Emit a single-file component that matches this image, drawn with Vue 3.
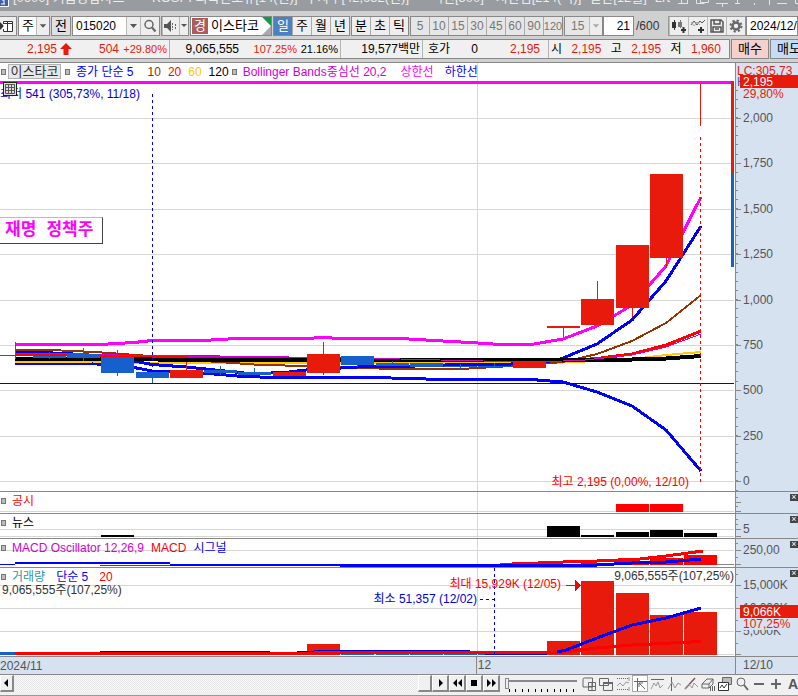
<script setup>
import { ref } from 'vue'

const units = ['일', '주', '월', '년']
const intraday = ['분', '초', '틱']
const minutes = ['5', '10', '15', '30', '45', '60', '90', '120']
const code = ref('015020')
const count = ref('21')
const date = ref('2024/12/10')

// left edge, open/close top and bottom, wick top and bottom
const candles = [
  { x: -1, t: 355, b: 356, wt: 342, wb: 359, c: 'dn', w: 17 },
  { x: 33, t: 356, b: 358, wt: 352, wb: 359, c: 'dn' },
  { x: 67, t: 354, b: 358, wt: 348, wb: 361, c: 'dn' },
  { x: 101, t: 357, b: 373, wt: 350, wb: 376, c: 'dn' },
  { x: 136, t: 372, b: 378, wt: 372, wb: 383, c: 'dn' },
  { x: 170, t: 370, b: 378, wt: 362, wb: 378, c: 'up' },
  { x: 204, t: 370, b: 373, wt: 366, wb: 375, c: 'dn' },
  { x: 238, t: 372, b: 375, wt: 368, wb: 375, c: 'dn' },
  { x: 273, t: 372, b: 376, wt: 371, wb: 376, c: 'up' },
  { x: 307, t: 354, b: 373, wt: 342, wb: 375, c: 'up' },
  { x: 341, t: 356, b: 365, wt: 356, wb: 367, c: 'dn' },
  { x: 376, t: 363, b: 366, wt: 361, wb: 366, c: 'dn' },
  { x: 410, t: 363, b: 367, wt: 363, wb: 367, c: 'dn' },
  { x: 444, t: 366, b: 367, wt: 364, wb: 369, c: 'dn' },
  { x: 478, t: 366, b: 367, wt: 363, wb: 368, c: 'dn' },
  { x: 513, t: 362, b: 368, wt: 362, wb: 368, c: 'up' },
  { x: 547, t: 326, b: 328, wt: 326, wb: 337, c: 'up' },
  { x: 581, t: 299, b: 325, wt: 281, wb: 325, c: 'up' },
  { x: 616, t: 245, b: 308, wt: 245, wb: 317, c: 'up' },
  { x: 650, t: 174, b: 258, wt: 174, wb: 268, c: 'up' },
  { x: 684, t: 84, b: 84, wt: 84, wb: 126, c: 'up' },
]
const prices = ['2,000', '1,750', '1,500', '1,250', '1,000', '750', '500', '250', '0']
const priceY = [118, 163, 209, 254, 300, 345, 390, 436, 481]
const minor = []
for (let y = 90; y < 490; y += 9.08) minor.push(Math.round(y))

const news = [[101, 535], [547, 526], [581, 535], [616, 532], [650, 530], [684, 533]]
const volumes = [[307, 644], [547, 641], [581, 581], [616, 593], [650, 615], [684, 612]]
const slowDays = [341, 376, 410, 444, 478]
const ticks = [509, 515, 522, 528, 535, 541, 547, 554, 560, 566, 573]
</script>

<template>
  <main class="app">
    <header class="title">
      <svg class="appicon" width="9" height="8" viewBox="0 0 9 8"><path d="M0 0h8v6H0z" fill="#3c62ac" /><path d="M0 6.500h8.500V0" stroke="#fff" fill="none" /><path d="M2 0h2v4M1 4h4" stroke="#fff" fill="none" /></svg>
      <span class="t1">[0600] 키움종합차트</span><span>-&nbsp; KOSPI 외국인보유[14(천)]</span><span>투자주[42,652(천)]</span>
      <span class="t2">액면[500]</span><span class="t3">시관임[214(억)]</span><span>결산[12월]</span><span>Lrt</span>
      <svg class="winicons" width="142" height="11" viewBox="656 0 142 11" fill="none" stroke="#e4e5e7">
        <path d="M654 3.500h11M659.500 0v4M665.500 0v4M674.500 0v3.500h8M678.500 0v2.500h8V0M694 3.500h12M700.500 4v3M713 3.500h5M715.500 0v4M732.500 3v2M747.500 0v5M755 3.500h10M773.500 0v3.500h9V0M792 4l5-4" />
      </svg>
    </header>

    <nav class="toolbar" aria-label="차트 도구">
      <button class="tb w17" aria-label="차트 창"><svg width="16" height="16" viewBox="0 0 16 16"><path d="M0 4l4 4-4 4z" fill="#333" /><path d="M3.500 5V3.500h9v10h-9V11M7.500 4v9M3 5.500h9" stroke="#333" fill="#fff" /></svg></button>
      <label class="combo w32 g1"><select aria-label="시장 구분"><option>주</option></select><svg viewBox="0 0 13 18"><path d="M3 7h7l-3.500 4z" /></svg></label>
      <button class="tb w20 g1 dark">전</button>
      <div class="group g1">
        <input v-model="code" class="code" aria-label="종목코드">
        <button class="flat w14" aria-label="종목 목록"><svg width="13" height="18" viewBox="0 0 13 18"><path d="M3 7h7l-3.500 4z" fill="#555" /></svg></button>
        <button class="flat w19" aria-label="검색"><svg width="16" height="16" viewBox="0 0 16 16" fill="none" stroke="#666"><circle cx="7" cy="6.500" r="4" stroke-width="1.500" /><path d="M10 9.500l3.500 4" stroke-width="2" /></svg></button>
      </div>
      <div class="group g1">
        <button class="flat w17" aria-label="소리"><svg width="16" height="16" viewBox="0 0 16 16"><path d="M1 6h3l4-4v12l-4-4H1z" fill="#555" /><path d="M9.500 5v7M12.500 6v2M12.500 9v2" stroke="#666" stroke-dasharray="2 1" /></svg></button>
        <button class="flat w9" aria-label="소리 설정"><svg width="9" height="18" viewBox="0 0 9 18"><path d="M1 7h6l-3 3z" fill="#555" /></svg></button>
      </div>
      <div class="stock g1"><b>경</b><span>이스타코</span><svg width="9" height="18" viewBox="0 0 9 18"><path d="M0 0h9v9z" fill="#129a48" /><path d="M9 9v9H0z" fill="#aaa" /></svg></div>
      <div class="group g1 periods"><button v-for="(u, i) in units" :key="u" :class="['p', { on: i === 0 }]">{{ u }}</button></div>
      <div class="group g1 periods"><button v-for="u in intraday" :key="u" class="p">{{ u }}</button></div>
      <div class="group g1 periods dim"><button v-for="u in minutes" :key="u" class="p">{{ u }}</button></div>
      <label class="combo w39 g1 off"><select aria-label="분 간격" disabled><option>15</option></select><svg viewBox="0 0 13 18"><path d="M3 7h7l-3.500 4z" /></svg></label>
      <label class="cnt"><input v-model="count" aria-label="봉 개수"><span>/600</span></label>
      <div class="group tools">
        <button class="flat w19" aria-label="봉 추가"><svg width="16" height="16" viewBox="0 0 16 16"><path d="M1 4h4v6H1zM3 2h1v10H3z" fill="#333" /><path d="M7 4h4v5H7zM9 2h1v8H9z" fill="#777" /><path d="M12.500 9v6M10 12h5" stroke="#333" stroke-width="2" /></svg></button>
        <button class="flat w19" aria-label="지표 추가"><svg width="16" height="16" viewBox="0 0 16 16"><path d="M1 7l3-4 3 4 3-4 2 2 3-3" fill="none" stroke="#555" /><path d="M1 4l3 4 3-4 3 3" fill="none" stroke="#aaa" /><path d="M11 9v6M8 12h6" stroke="#333" stroke-width="2" /></svg></button>
        <button class="flat w19" aria-label="저장"><svg width="16" height="16" viewBox="0 0 16 16" fill="none" stroke="#555" stroke-width="1.500"><path d="M2 2h10l2 2v10H2zM5 2v4h6V2M4 14V9h8v5M6 11h4" /></svg></button>
        <button class="flat w19" aria-label="설정"><svg width="16" height="16" viewBox="0 0 16 16" fill="none" stroke="#666"><circle cx="8" cy="8" r="3.500" stroke-width="2.500" /><circle cx="8" cy="8" r="5.500" stroke-width="2" stroke-dasharray="2.160 2.160" /></svg></button>
      </div>
      <input v-model="date" class="date" aria-label="날짜">
    </nav>

    <section class="quote" aria-label="시세">
      <div class="strip">
        <div class="cell c1 red"><span class="n1">2,195</span><svg width="12" height="12" viewBox="0 0 12 12"><path d="M6 0l6 6H8.500v6h-5V6H0z" fill="#e81a0b" /></svg><span class="n2">504</span><span class="n3">+29.80%</span></div>
        <div class="cell c2"><span class="n4">9,065,555</span><span class="n5 red">107.25%</span><span class="n6">21.16%</span></div>
        <div class="cell c3"><span>19,577백만</span></div>
        <div class="cell c4"><span>호가</span><span class="n7">0</span><span class="n8 red">2,195</span></div>
        <div class="cell c5"><span>시</span><span class="red">2,195</span><span>고</span><span class="red">2,195</span><span>저</span><span class="red">1,960</span></div>
      </div>
      <button class="buy">매수</button><button class="sell">매도</button>
    </section>

    <section class="panel line main">
      <div class="plot">
        <svg class="gfx" viewBox="0 63 735 428" preserveAspectRatio="none">
          <g fill="#d6d6d6"><rect v-for="y in priceY" :key="y" x="0" :y="y" width="734" height="1" /><rect x="477" y="63" width="1" height="428" /></g>
          <g fill="none" stroke-linejoin="round">
            <path d="M0 82.500H734M15 344.500H100L134 342.500 152 340.500H203L237 338.500H306L323 337.500 340 338.500 400 338.500 443 341 470 342.500 500 344.500H531L563 339 597 326 632 305 666 266 701 197" stroke="#f0f" stroke-width="3" />
            <path d="M15 363.500H92L134 367.500 152 371 203 373 237 376 271 377.500H374L443 379.500H531L563 382 597 392 632 406 666 430 701 471" stroke="#00f" stroke-width="3" />
            <path d="M15 361.500H92L134 362.500H460L563 362.500 597 361 632 359 666 355 701 352" stroke="#ffc800" stroke-width="2" />
            <path d="M15 350H50L95 352 150 356 204 361 254 364.500 300 366 340 367 392 369H460L495 367 529 365 563 362 597 354 632 341 666 323 701 295" stroke="#963200" stroke-width="2" />
            <path d="M15 352.500H40L66 353.500 100 356 134 361 152 364.500 186 367 220 370.500 254 374 289 372 306 370 341 368 357 367 400 366.500 460 364.500 494 365 529 363 555 360.500 563 358 597 344 632 320 666 281 701 226" stroke="#00f" stroke-width="3" />
            <path d="M15 354.500H67L134 356 203 356 237 358 340 359 529 361 563 361 597 358.500 632 354 666 345 701 331" stroke="#f00" stroke-width="3" />
            <path d="M15 358.500H100L152 359.500 340 360H460L597 360.500 632 359.500 666 358.500 701 356" stroke="#000" stroke-width="4" />
            <path d="M15 353.500H67L134 355.500 237 356.500 340 357.500 400 359 460 360.500 529 362 580 360.500 632 355 666 347 701 334" stroke="#d400d4" stroke-width="1" />
          </g>
          <rect x="0" y="383" width="734" height="1" fill="#0000c8" />
          <g v-for="c in candles" :key="c.x" :class="c.c"><rect :x="c.x" :y="c.t" :width="c.w || 33" :height="c.b - c.t" /><rect :x="c.x + 16" :y="c.wt" width="1" :height="c.wb - c.wt" /></g>
          <path d="M152.500 94V372" stroke="#00d" stroke-dasharray="3 3" />
          <path d="M700.500 137V482" stroke="#f00" stroke-dasharray="3 3" />
          <rect x="731" y="81" width="3" height="93" fill="#e81a0b" /><rect x="731" y="174" width="3" height="93" fill="#1560cc" />
        </svg>
        <div class="legend">
          <i></i><button class="name">이스타코</button><i></i>
          <span class="blue l1">종가 단순 5</span><span class="brown l4">10</span><span class="pure">20</span><span class="gold">60</span><span class="l2">120</span><i></i>
          <span class="purple l0">Bollinger Bands중심선 20,2</span><span class="mag l4">상한선</span><span class="blue l5">하한선</span>
        </div>
        <span class="note low">최저 541 (305,73%, 11/18)</span>
        <button class="grid" aria-label="표 보기"><svg width="14" height="14" viewBox="0 0 14 14" fill="none" stroke="#555"><path d="M2.500 2.500h9v9h-9zM2.500 5.500h9M2.500 8.500h9M5.500 3v8M8.500 3v8" /></svg></button>
        <span class="theme">재명 정책주</span>
        <span class="note high">최고 2,195 (0,00%, 12/10)</span>
      </div>
      <div class="axis">
        <svg width="63" height="428" viewBox="735 63 63 428">
          <rect x="735" y="63" width="1" height="428" fill="#888" />
          <g fill="#888"><rect v-for="y in minor" :key="y" x="736" :y="y" width="2" height="1" /><rect v-for="y in priceY" :key="'p' + y" x="736" :y="y" width="5" height="1" /></g>
          <text v-for="(p, i) in prices" :key="p" x="743" :y="priceY[i] + 4">{{ p }}</text>
          <text x="737" y="75" class="fr">LC:305,73</text>
          <text x="737" y="86" class="fb">H</text>
          <rect x="740" y="75" width="58" height="13" fill="#e81a0b" />
          <text x="743" y="86" class="fw">2,195</text><text x="743" y="98" class="fr">29,80%</text>
        </svg>
      </div>
    </section>

    <section class="panel disclosure line">
      <div class="plot">
        <svg class="gfx" viewBox="0 492 735 21" preserveAspectRatio="none"><path d="M0 511.500H734M477.500 492V513" stroke="#d6d6d6" /><path d="M616 504h33v8h-33zM650 504h33v8h-33z" fill="#f00" /></svg>
        <div class="legend"><i></i><span class="pure l0">공시</span></div>
      </div>
      <div class="axis"><svg width="63" height="21" viewBox="735 492 63 21"><path d="M735.500 492V513M736 497.500h2M736 502.500h5M736 506.500h2M736 511.500h5" stroke="#888" /></svg><button class="close" aria-label="공시 닫기"></button></div>
    </section>

    <section class="panel news line">
      <div class="plot">
        <svg class="gfx" viewBox="0 514 735 24" preserveAspectRatio="none"><path d="M0 529.500H734M0 536.500H734M477.500 514V538" stroke="#d6d6d6" /><rect v-for="n in news" :key="n[0]" :x="n[0]" :y="n[1]" width="33" :height="537 - n[1]" /></svg>
        <div class="legend"><i></i><span class="l0">뉴스</span></div>
      </div>
      <div class="axis"><svg width="63" height="24" viewBox="735 514 63 24"><path d="M735.500 514V538M736 519.500h2M736 524.500h2M736 529.500h5M736 536.500h5" stroke="#888" /><text x="743" y="533">5</text></svg><button class="close" aria-label="뉴스 닫기"></button></div>
    </section>

    <section class="panel macd line">
      <div class="plot">
        <svg class="gfx" viewBox="0 539 735 28" preserveAspectRatio="none">
          <path d="M0 550.500H734M477.500 539V567" stroke="#d6d6d6" /><path d="M684 564.500H734" stroke="#888" />
          <path d="M581 563h33v2h-33zM616 561h33v4h-33zM650 558h33v7h-33zM684 555h33v10h-33z" fill="#f00" />
          <g fill="none" stroke-width="3"><path d="M100 565.500H170" stroke="#f00" stroke-width="1" /><path d="M500 564.500L563 562 597 561 640 559 666 556 703 551" stroke="#f00" /><path d="M0 564.500H15" stroke="#00f" stroke-width="1" /><path d="M15 563H170M170 564.500H340" stroke="#00f" stroke-width="2" /><path d="M340 565H597L632 563 666 562 701 559" stroke="#00f" /></g>
        </svg>
        <div class="legend"><i></i><span class="purple l0">MACD Oscillator 12,26,9</span><span class="pure">MACD</span><span class="blue">시그널</span></div>
      </div>
      <div class="axis"><svg width="63" height="28" viewBox="735 539 63 28"><path d="M735.500 539V567M736 543.500h2M736 550.500h5M736 557.500h2M736 564.500h5" stroke="#888" /><text x="743" y="554">250,00</text></svg><button class="close" aria-label="MACD 닫기"></button></div>
    </section>

    <section class="panel volume line">
      <div class="plot">
        <svg class="gfx" viewBox="0 568 735 88" preserveAspectRatio="none">
          <path d="M0 585.500H734M0 608.500H734M0 631.500H734M0 654.500H734M477.500 568V656" stroke="#d6d6d6" />
          <path d="M0 652h15v3H0z" fill="#1560cc" />
          <rect v-for="x in slowDays" :key="x" :x="x" y="654" width="33" height="1" fill="#1560cc" />
          <rect v-for="v in volumes" :key="v[0]" :x="v[0]" :y="v[1]" width="33" :height="655 - v[1]" fill="#e81a0b" />
          <g fill="none"><path d="M100 651.500H270M297 651.500H314M485 654.500H547" stroke="#00d" /><path d="M314 650.500H470" stroke="#00d" />
            <path d="M15 653.500H340M340 652.500H560L597 648 632 645 701 641.500" stroke="#f00" stroke-width="3" />
            <path d="M557 652L566 650 597 638 632 625 666 618 701 608" stroke="#00f" stroke-width="3" /></g>
          <path d="M494.500 568V655M480 599.500H494" fill="none" stroke="#00d" stroke-dasharray="3 3" />
          <path d="M566 585h9v-5l6 5.500-6 5.500v-5h-9z" fill="#f00" />
        </svg>
        <div class="legend"><i></i><span class="teal l0">거래량</span><span class="blue l5">단순 5</span><span class="pure l5">20</span></div>
        <span class="note v-left">9,065,555주(107,25%)</span>
        <span class="note v-max">최대 15,929K (12/05)</span>
        <span class="note v-min">최소 51,357 (12/02)</span>
        <span class="note v-right">9,065,555주(107,25%)</span>
      </div>
      <div class="axis">
        <svg width="63" height="88" viewBox="735 568 63 88">
          <path d="M735.500 568V656M736 574.500h2M736 585.500h5M736 597.500h2M736 608.500h5M736 620.500h2M736 631.500h5M736 643.500h2M736 654.500h5" stroke="#888" />
          <text x="743" y="589">15,000K</text><text x="743" y="612">10,000K</text><text x="743" y="635">5,000K</text>
          <rect x="740" y="618" width="58" height="12" fill="#d6e2f0" />
          <rect x="740" y="605" width="58" height="13" fill="#e81a0b" /><text x="743" y="616" class="fw">9,066K</text><text x="743" y="628" class="fr">107,25%</text>
        </svg><button class="close" aria-label="거래량 닫기"></button>
      </div>
    </section>

    <section class="dates line"><span class="d1">2024/11</span><span class="d2">12</span><span class="d3">12/10</span></section>

    <footer class="bottom">
      <button class="sb w14" aria-label="왼쪽"><svg width="12" height="14" viewBox="0 0 12 14"><path d="M7 3v8L3 7z" /></svg></button>
      <div class="track"></div>
      <button class="sb w14" aria-label="막대"></button>
      <button class="sb" aria-label="오른쪽"><svg width="12" height="14" viewBox="0 0 12 14"><path d="M5 3v8l4-4z" /></svg></button>
      <button class="sb" aria-label="되감기"><svg width="12" height="14" viewBox="0 0 12 14"><path d="M6 3v8L2 7zM11 3v8L7 7z" /></svg></button>
      <button class="sb" aria-label="정지"><svg width="12" height="14" viewBox="0 0 12 14"><path d="M3 4h6v6H3z" /></svg></button>
      <button class="sb" aria-label="빨리 감기"><svg width="12" height="14" viewBox="0 0 12 14"><path d="M2 3v8l4-4zM7 3v8l4-4z" /></svg></button>
      <div class="zoom"><input type="range" min="0" max="100" value="0" aria-label="확대"><svg width="72" height="4" viewBox="504 0 72 4"><rect v-for="t in ticks" :key="t" :x="t - 1" y="0" width="1" height="3" /></svg></div>
      <div class="icons">
        <button aria-label="창 추가"><svg viewBox="0 0 14 14"><path d="M1 2.500q0-1.500 1.500-1.500h8v9H1zM6.500 5.500h7v8h-7zM10 6v8M7 9.500h6" fill="#f0f0f0" /></svg></button>
        <button aria-label="창 겹치기"><svg viewBox="0 0 14 14"><path d="M.5 1.500h9v7h-9zM4.500 5.500h9v8h-9z" fill="#f0f0f0" /><path d="M4 6h10" stroke-width="2" /></svg></button>
        <button aria-label="구간 보기"><svg viewBox="0 0 14 14"><path d="M1 1.500h12M1 12.500h12" stroke-dasharray="1 1" /><path d="M1 9l3-3 3 3 3-4 3 1M13 0v4M13 10v4" stroke="#999" /></svg></button>
        <button class="act" aria-label="십자선"><svg viewBox="0 0 14 14"><path d="M1 4.500h13M4.500 1v13" /><path d="M6 6l6 6M6 10V6h4" /></svg></button>
        <button aria-label="수평선"><svg viewBox="0 0 14 14"><path d="M1 2.500h13" /><path d="M1 12l3-6 2 3 2-4 2 6 3-3" stroke="#999" /></svg></button>
        <button aria-label="수직선"><svg viewBox="0 0 14 14"><path d="M4.500 0v14" stroke="#835060" /><path d="M1 12l4-7 3 6 3-5 3 2" stroke="#999" /></svg></button>
        <button aria-label="추세선"><svg viewBox="0 0 14 14"><path d="M1 12L11 1" stroke="#835060" stroke-width="1.500" /><path d="M1 12l4-5 3 4 2-5 4 4" stroke="#999" /></svg></button>
        <button aria-label="지우개"><svg viewBox="0 0 14 14"><path d="M1 7l5-5h6L8 7v4H1zM1 7h7M8 11l4-4V2M9.500 9v5M11.500 9v5M13.500 9v5" /></svg></button>
        <button aria-label="차트 겹침"><svg viewBox="0 0 14 14"><path d="M4.500.5h9v7h-9z" fill="#bbb" /><path d="M.5 5.500h10v8H.5z" fill="#fff" stroke="#333" /><path d="M2 11l2-3 2 3 3-4" stroke="#333" /></svg></button>
        <button aria-label="돋보기"><svg viewBox="0 0 14 14"><circle cx="6" cy="5" r="4" /><path d="M9 8l4 5" stroke-width="2" /></svg></button>
        <button aria-label="축소"><svg viewBox="0 0 14 14"><path d="M2 7h10" stroke-width="2" /></svg></button>
        <button aria-label="확대 하기"><svg viewBox="0 0 14 14"><path d="M2 7h10M7 2v10" stroke-width="2" /></svg></button>
        <button class="a">A</button>
      </div>
    </footer>
  </main>
</template>

<style>
body { margin: 0; background: #d0d0d0; }
</style>

<style scoped>
* { box-sizing: border-box; }
.app { font-family: "Liberation Sans", "Noto Sans CJK KR", sans-serif; font-size: 12px; line-height: 14px; color: #000; background: #d0d0d0; overflow: hidden; white-space: nowrap; }
button, input, select { font: inherit; color: inherit; margin: 0; padding: 0; border: 0; border-radius: 0; background: none; min-width: 0; }
button { display: flex; align-items: center; justify-content: center; flex: none; }
svg { display: block; flex: none; }
.title { height: 11px; background: #989ba0; color: #eceded; display: flex; gap: 8px; overflow: hidden; font-size: 13px; }
.title > span { margin-top: -9px; height: 14px; flex: none; }
.title .appicon { margin-right: -4px; }
.title .t1 { margin-right: 8px; }
.title .t2 { margin-left: 14px; }
.title .t3 { margin-left: 4px; }
.winicons { margin-left: auto; }

.toolbar { height: 28px; padding-top: 5px; display: flex; align-items: flex-start; background: #d0d0d0; overflow: hidden; font-size: 13px; }
.g1 { margin-left: 1px; }
.toolbar > * { height: 20px; flex: none; }
.tb, .group, .combo, .stock, .date, .cnt input { border: 1px solid #888; background: #fff; height: 20px; }
.tb { background: #eee; }
.dark { background: #e0e0e0; }
.w9 { width: 9px; } .w14 { width: 14px; } .w17 { width: 17px; } .w19 { width: 19px; } .w20 { width: 20px; } .w32 { width: 32px; } .w39 { width: 39px; }
.tb.w17 { border-left: 0; }
.combo { display: grid; grid-template-columns: 1fr 13px; }
.combo select { appearance: none; grid-area: 1 / 1 / 2 / 3; padding-left: 3px; opacity: 1; }
.combo svg { grid-area: 1 / 2; width: 13px; height: 18px; background: #eee; border-left: 1px solid #bbb; pointer-events: none; fill: #555; }
.off { background: #e6e6e6; color: #777; font-size: 12px; }
.off select { padding-left: 6px; }
.off svg { fill: #aaa; }
.group { display: flex; }
.flat { background: #eee; height: 18px; border-left: 1px solid #bbb; }
.code { width: 53px; padding-left: 3px; font-size: 12px; }
.stock { display: flex; width: 82px; align-items: center; gap: 2px; padding-left: 1px; }
.stock b { width: 16px; height: 16px; background: #ad5c5c; color: #fff; font-weight: 400; text-align: center; line-height: 16px; }
.stock span { flex: 1; padding-left: 1px; }
.periods .p { width: 19px; height: 18px; background: #eee; border-left: 1px solid #aaa; }
.periods .p:first-child { border-left: 0; width: 18px; }
.periods .p.on { background: #4a80c4; color: #fff; }
.dim { font-size: 12px; }
.dim .p { background: #e6e6e6; color: #777; overflow: hidden; }
.dim .p:last-child { font-size: 11px; }
.cnt { display: flex; align-items: center; gap: 2px; width: 65px; font-size: 12px; }
.cnt input { width: 31px; text-align: right; padding-right: 3px; }
.cnt span { color: #333; }
.tools { border-color: #999; }
.date { flex: 1 1 0 !important; padding-left: 3px; font-size: 12px; }

.quote { display: flex; height: 23px; padding-bottom: 3px; background: #d0d0d0; overflow: hidden; }
.strip { flex: 1; display: flex; border: 1px solid #888; border-left: 0; background: #f0f0f0; }
.cell { display: flex; align-items: center; justify-content: flex-end; border-right: 1px solid #b4b4b4; padding-right: 2px; flex: none; }
.cell:last-child { border-right: 0; flex: 1; }
.c1 { width: 170px; } .c2 { width: 171px; } .c3 { width: 82px; } .c4 { width: 126px; padding-right: 8px; }
.c1 svg { margin-left: 3px; }
.n2 { width: 47px; text-align: right; } .n3 { width: 48px; text-align: right; }
.n5 { width: 58px; text-align: right; } .n6 { width: 41px; text-align: right; }
.n3, .n5, .n6 { font-size: 11px; }
.n7 { width: 28px; text-align: right; } .n8 { width: 62px; text-align: right; }
.c5 { justify-content: space-between; padding: 0 8px 0 2px; }
.buy, .sell { border: 1px solid #888; margin-left: 1px; width: 38px; height: 20px; background: #f6d0cb; font-size: 13px; }
.sell { width: 28px; justify-content: flex-start; padding-left: 6px; background: #c6dcf4; border-right: 0; }

.panel { display: flex; background: #fff; }
.line { border-top: 1px solid #888; }
.plot { flex: 1; position: relative; min-width: 0; overflow: hidden; }
.gfx { width: 100%; height: 100%; position: absolute; left: 0; top: 0; shape-rendering: crispEdges; }
.main .plot, .main .axis { height: 428px; }
.disclosure .plot { height: 21px; } .news .plot { height: 24px; } .macd .plot { height: 28px; } .volume .plot { height: 88px; }
.axis { width: 63px; position: relative; background: #d6e2f0; flex: none; overflow: hidden; }
.axis svg { shape-rendering: crispEdges; }
.axis text { fill: #555; }
.axis .fr { fill: #e81a0b; } .axis .fb { fill: #1560cc; } .axis .fw { fill: #fff; }
.up { fill: #e81a0b; } .dn { fill: #1560cc; }
.legend { position: relative; display: flex; align-items: center; height: 16px; padding: 1px 0 0 1px; }
.legend i { width: 5px; height: 6px; border: 1px solid #777; background: #bbb; flex: none; }
.legend > span { margin-left: 7px; }
.legend .name { border: 1px solid #b0b0b0; background: #e8e8e8; height: 15px; width: 53px; margin: 0 4px 0 2px; color: #333; font-size: 13px; }
.legend .l0, .legend .l1 { margin-left: 6px; }
.legend .l2 { margin-right: 3px; }
.legend .l4 { margin-left: 14px; }
.legend .l5 { margin-left: 11px; }
.volume .legend, .macd .legend { height: 17px; }
.red { color: #e81a0b; } .pure { color: #f00; } .blue { color: #00f; } .brown { color: #963200; } .gold { color: #ffc800; } .purple { color: #d400d4; } .mag { color: #f0f; } .teal { color: #329696; }
.note { position: absolute; }
.low { left: 0; top: 24px; color: #00d; }
.high { right: 46px; top: 412px; color: #f00; }
.grid { position: absolute; left: 3px; top: 19px; width: 14px; height: 14px; background: #ddd; border: 1px solid #222; overflow: hidden; }
.theme { position: absolute; left: 0; top: 154px; height: 27px; width: 103px; padding-left: 5px; border: 1px solid #444; border-top: 1px solid #bbb; border-left: 0; background: #fff; color: #f0f; font: 700 17px/25px "Liberation Mono", "Noto Sans CJK KR", monospace; }
.v-left { left: 2px; top: 15px; color: #333; }
.v-max { right: 174px; top: 9px; color: #f00; }
.v-min { right: 258px; top: 24px; color: #00d; }
.v-right { right: 1px; top: 1px; color: #333; }
.close { position: absolute; right: 0; top: 2px; width: 8px; height: 7px; background: #444; }
.close::after { content: "×"; color: #fff; font-size: 9px; line-height: 7px; }

.dates { display: flex; align-items: center; height: 18px; background: #d6e2f0; color: #555; }
.d1 { flex: 477 1 0; } .d2 { flex: 258 1 0; border-left: 1px solid #888; padding-left: 1px; line-height: 17px; } .d3 { flex: none; width: 63px; border-left: 1px solid #888; padding-left: 7px; line-height: 17px; }

.bottom { display: flex; height: 22px; border-top: 1px solid #888; border-bottom: 1px solid #999; background: #f0f0f0; overflow: hidden; }
.sb { width: 17px; height: 17px; background: #f0f0f0; border: 1px solid #fff; border-right: 2px solid #888; border-bottom: 2px solid #888; }
.sb.w14 { width: 14px; }
.track { flex: 1; height: 17px; background: repeating-conic-gradient(#e6e6e6 0 25%, #fafafa 0 50%) 0 0 / 2px 2px; }
.zoom { width: 72px; margin: 2px 4px 0 5px; flex: none; }
.zoom input { appearance: none; display: block; width: 72px; height: 12px; background: linear-gradient(#888, #888) 0 3px / 100% 2px no-repeat; }
.zoom input::-webkit-slider-thumb { appearance: none; width: 4px; height: 11px; background: #eee; border: 1px solid #888; }
.icons { display: flex; flex: none; width: 217px; gap: 1px; }
.icons button { width: 16px; height: 17px; }
.icons svg { width: 14px; height: 14px; fill: none; stroke: #666; }
.icons .act { background: #fff; border: 1px solid #aaa; }
.icons .a { font: 700 14px/16px "Liberation Sans", sans-serif; color: #555; }
</style>
